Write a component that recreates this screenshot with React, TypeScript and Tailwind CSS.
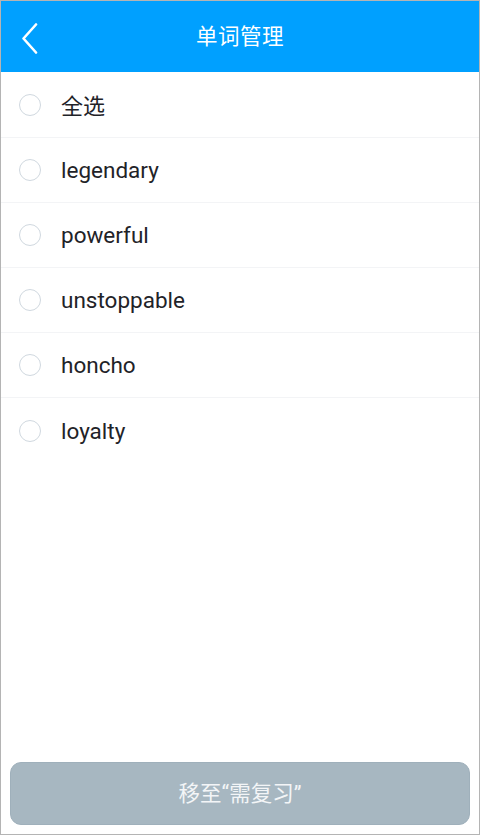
import React, { useState } from 'react';

const words = ['legendary', 'powerful', 'unstoppable', 'honcho', 'loyalty'];

const font = { fontFamily: 'Roboto, "Noto Sans CJK SC", sans-serif' };

function Radio({ checked }: { checked: boolean }) {
  return (
    <span
      className={`w-[22px] h-[22px] rounded-full border-[1.5px] shrink-0 ${
        checked ? 'border-[#00a0ff] bg-[#00a0ff]' : 'border-[#d0d8df] bg-white'
      }`}
    />
  );
}

export default function App() {
  const [selected, setSelected] = useState<string[]>([]);
  const allOn = selected.length === words.length;

  const toggle = (w: string) =>
    setSelected((s) => (s.includes(w) ? s.filter((x) => x !== w) : [...s, w]));

  return (
    <div className="h-[835px] w-[480px] flex flex-col bg-white border border-[#b4b4b4]" style={font}>
      {/* Header */}
      <div className="h-[71px] bg-[#00a0ff] flex items-center relative shrink-0">
        <button className="absolute left-[20px] top-[21px] w-[20px] h-[32px] flex items-center">
          <svg width="18" height="31" viewBox="0 0 18 31" fill="none">
            <path d="M15 1.5 L2.5 15.5 L15 29.5" stroke="white" strokeWidth="2.6" strokeLinecap="round" strokeLinejoin="round" />
          </svg>
        </button>
        <h1 className="flex-1 text-center text-white text-[21.5px] tracking-[0.5px] pt-[2px]">单词管理</h1>
      </div>

      {/* List */}
      <div className="flex-1 pt-[1px]">
        <div
          className="h-[65px] flex items-center pl-[18px] gap-[20px] border-b border-[#f3f4f6]"
          onClick={() => setSelected(allOn ? [] : [...words])}
        >
          <Radio checked={allOn} />
          <span className="text-[22px] text-[#1f2328] pt-[2px]">全选</span>
        </div>
        {words.map((w, i) => (
          <div
            key={w}
            onClick={() => toggle(w)}
            className={`h-[65px] flex items-center pl-[18px] gap-[20px] ${
              i < words.length - 1 ? 'border-b border-[#f3f4f6]' : ''
            }`}
          >
            <Radio checked={selected.includes(w)} />
            <span className="text-[22.5px] text-[#1f2328] pt-[2px]">{w}</span>
          </div>
        ))}
      </div>

      {/* Bottom action */}
      <div className="px-[9px] pb-[9px] shrink-0">
        <button
          disabled={selected.length === 0}
          className="w-full h-[63px] rounded-[11px] bg-[#a7b7c1] text-[#f3f5f7] text-[21.5px] border border-[#9fb0bb] pt-[1px]"
        >
          移至“需复习”
        </button>
      </div>
    </div>
  );
}
